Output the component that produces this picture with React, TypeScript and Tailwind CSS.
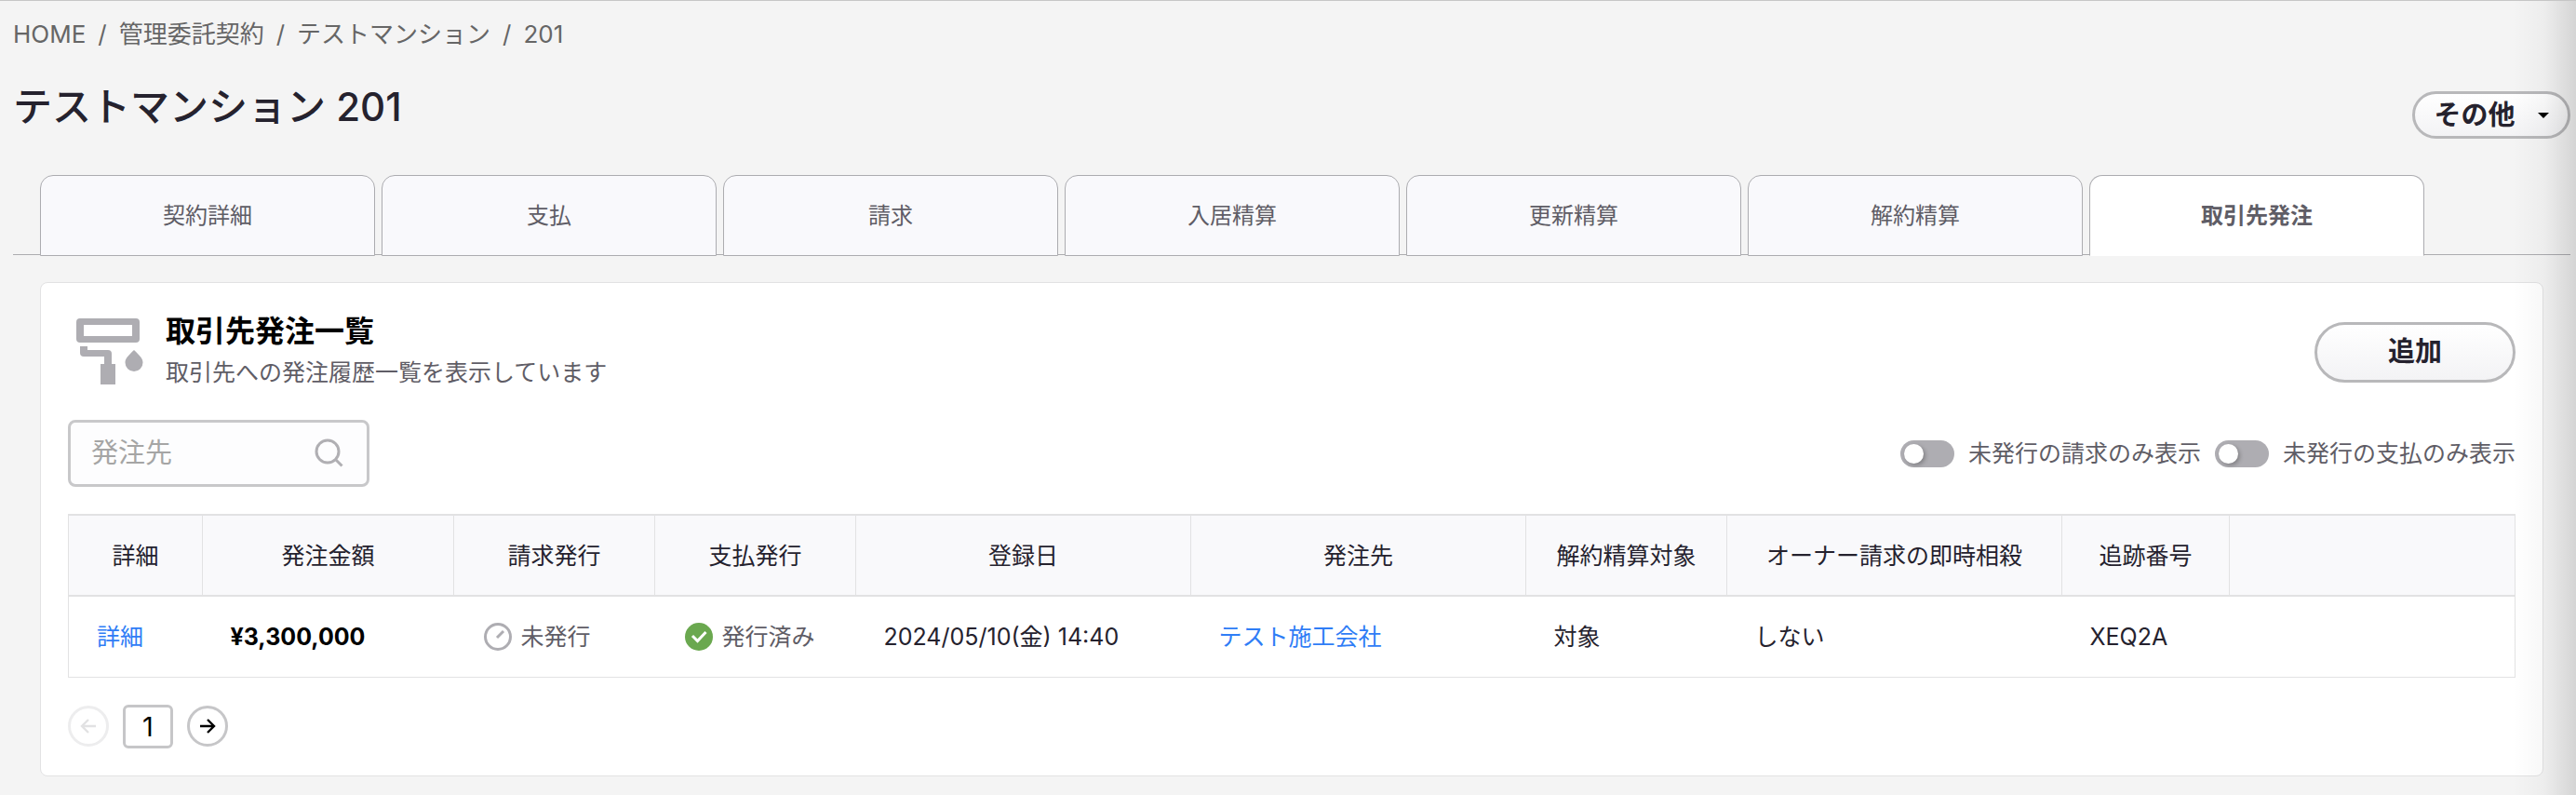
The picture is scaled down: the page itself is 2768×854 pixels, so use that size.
import { clsx } from "clsx";

const tabs = ["契約詳細", "支払", "請求", "入居精算", "更新精算", "解約精算", "取引先発注"];

const columns = [
    { label: "詳細", width: "w-[144px]" },
    { label: "発注金額", width: "w-[270px]" },
    { label: "請求発行", width: "w-[216px]" },
    { label: "支払発行", width: "w-[216px]" },
    { label: "登録日", width: "w-[360px]" },
    { label: "発注先", width: "w-[360px]" },
    { label: "解約精算対象", width: "w-[216px]" },
    { label: "オーナー請求の即時相殺", width: "w-[360px]" },
    { label: "追跡番号", width: "w-[180px]" },
    { label: "", width: "" },
];

function RollerIcon() {
    return (
        <svg viewBox="0 0 72 72" className="size-[72px]" fill="#aeadb2" aria-hidden="true">
            <path fillRule="evenodd" d="M4 0h60a4 4 0 0 1 4 4v18a4 4 0 0 1-4 4H4a4 4 0 0 1-4-4V4a4 4 0 0 1 4-4ZM8 7v12h52V7Z" />
            <path d="M4 30h8v4h22a4 4 0 0 1 4 4v11h4v22H26V49h4v-8H8a4 4 0 0 1-4-4Z" />
            <path d="M62 34c6 6 9.500 9 9.500 13.500a9.500 9.500 0 0 1-19 0C52.500 43 56 40 62 34Z" />
        </svg>
    );
}

function SearchIcon() {
    return (
        <svg viewBox="0 0 32 32" className="size-8" fill="none" stroke="#b0afb3" strokeWidth="3" aria-hidden="true">
            <circle cx="14" cy="14" r="12" />
            <path d="M22.500 22.500l7 7" />
        </svg>
    );
}

function PendingIcon() {
    return (
        <svg viewBox="0 0 30 30" className="size-[30px]" fill="none" stroke="#aeadb2" aria-hidden="true">
            <circle cx="15" cy="15" r="13.5" strokeWidth="3" />
            <path d="M14 16l7-7" strokeWidth="3" />
        </svg>
    );
}

function DoneIcon() {
    return (
        <svg viewBox="0 0 30 30" className="size-[30px]" fill="none" aria-hidden="true">
            <circle cx="15" cy="15" r="15" fill="#6aa84f" />
            <path d="M8 14l5.500 5.500L22.500 10" stroke="#fff" strokeWidth="3" />
        </svg>
    );
}

function ArrowIcon({ flip = false }: { flip?: boolean }) {
    return (
        <svg viewBox="0 0 18 18" className={clsx("size-[18px]", flip && "rotate-180")} fill="none" stroke="currentColor" strokeWidth="2.4" aria-hidden="true">
            <path d="M1 9h15M9 2l7 7-7 7" />
        </svg>
    );
}

function Switch({ label }: { label: string }) {
    return (
        <label className="flex items-center gap-[15px] text-[25px] leading-9 text-[#5f5d66]">
            <span className="relative flex">
                <input type="checkbox" role="switch" className="h-[29px] w-[58px] appearance-none rounded-full bg-[#aeadb2]" />
                <span className="pointer-events-none absolute top-1 left-1 size-[21px] rounded-full bg-white shadow-[2px_2px_4px_rgba(0,0,0,0.25)]" />
            </span>
            {label}
        </label>
    );
}

function Breadcrumb() {
    return (
        <nav className="flex gap-[13px] text-[26px] leading-9 text-[#666]">
            <a href="#">HOME</a>
            <span>/</span>
            <a href="#">管理委託契約</a>
            <span>/</span>
            <a href="#">テストマンション</a>
            <span>/</span>
            <span>201</span>
        </nav>
    );
}

function OrdersTable() {
    return (
        <table className="w-full table-fixed border-collapse border border-[#e2e2e3] text-left text-[25px] leading-9 text-[#25222e]">
            <thead className="border-y-2 border-[#e2e2e3] bg-[#f9f9fb]">
                <tr>
                    {columns.map((column) => (
                        <th key={column.label} className={clsx("h-[87px] border-x border-[#e2e2e3] p-0 text-center font-normal whitespace-nowrap", column.width)}>
                            {column.label}
                        </th>
                    ))}
                </tr>
            </thead>
            <tbody>
                <tr className="h-[87px] whitespace-nowrap">
                    <td className="px-[30px]"><a href="#" className="text-[#2f7df6]">詳細</a></td>
                    <td className="px-[30px] font-bold text-black">¥3,300,000</td>
                    <td className="px-8">
                        <span className="flex items-center gap-2.5 text-[#5f5d66]"><PendingIcon />未発行</span>
                    </td>
                    <td className="px-8">
                        <span className="flex items-center gap-2.5 text-[#5f5d66]"><DoneIcon />発行済み</span>
                    </td>
                    <td className="px-[30px]">2024/05/10(金) 14:40</td>
                    <td className="px-[30px]"><a href="#" className="text-[#2f7df6]">テスト施工会社</a></td>
                    <td className="px-[30px]">対象</td>
                    <td className="px-[30px]">しない</td>
                    <td className="px-[30px]">XEQ2A</td>
                    <td />
                </tr>
            </tbody>
        </table>
    );
}

export default function App() {
    return (
        <div className="relative min-h-screen border-t border-[#c6c6c6] bg-[#f4f4f4] pt-[18px] pr-[6px] pb-5 pl-[14px] font-[Inter,'Noto_Sans_CJK_JP',sans-serif]">
            <Breadcrumb />

            <header className="flex items-start justify-between pt-[30px]">
                <h1 className="text-[42px] leading-[60px] font-medium text-[#25222e]">テストマンション 201</h1>
                <button type="button" className="mt-[13px] flex h-[51px] w-[170px] items-center justify-center gap-6 rounded-full border-3 border-[#b8b8ba] bg-linear-to-b from-white to-[#f3f3f5] text-[29px] leading-none font-bold text-[#25222e]">
                    その他
                    <span className="border-x-6 border-t-6 border-x-transparent border-t-black" />
                </button>
            </header>

            {/* Tabs */}
            <div className="mt-[39px] flex h-[86px] gap-[7px] border-b border-[#acacb0] px-[29px]">
                {tabs.map((tab, i) => (
                    <button
                        key={tab}
                        type="button"
                        className={clsx(
                            "h-[87px] max-w-[360px] flex-1 rounded-t-[14px] border border-[#acacb0] text-[24px] text-[#5f5d66]",
                            i === tabs.length - 1 ? "border-b-white bg-white font-bold" : "bg-[#f9f9fc]"
                        )}
                    >
                        {tab}
                    </button>
                ))}
            </div>

            <section className="mx-[29px] mt-[29px] rounded-lg border border-[#e2e2e3] bg-white px-[29px] pb-[29px]">
                <div className="flex items-center justify-between pt-[30px]">
                    <div className="flex items-center gap-6 pl-[9px]">
                        <RollerIcon />
                        <div>
                            <h2 className="text-[32px] leading-[44px] font-bold text-black">取引先発注一覧</h2>
                            <p className="text-[25px] leading-[44px] text-[#5f5d66]">取引先への発注履歴一覧を表示しています</p>
                        </div>
                    </div>
                    <button type="button" className="h-[65px] w-[216px] rounded-full border-3 border-[#b8b8ba] bg-linear-to-b from-white to-[#f3f3f5] text-[29px] font-bold text-[#25222e]">
                        追加
                    </button>
                </div>

                <div className="mt-[29px] flex items-center justify-between">
                    <label className="flex h-[72px] w-[324px] items-center rounded-lg border-3 border-[#c8c8ca] bg-[#fdfdfe] pr-6 pl-[22px]">
                        <input type="text" aria-label="発注先" placeholder="発注先" className="min-w-0 flex-1 bg-transparent text-[29px] outline-none placeholder:text-[#a5a5a5]" />
                        <SearchIcon />
                    </label>
                    <div className="flex gap-[15px]">
                        <Switch label="未発行の請求のみ表示" />
                        <Switch label="未発行の支払のみ表示" />
                    </div>
                </div>

                <div className="mt-[29px]">
                    <OrdersTable />
                </div>

                {/* Pagination */}
                <div className="mt-[29px] flex items-center gap-[15px]">
                    <button type="button" disabled aria-label="前へ" className="flex size-[44px] items-center justify-center rounded-full border-3 border-[#ededee] text-[#e2e2e3]">
                        <ArrowIcon flip />
                    </button>
                    <button type="button" className="h-[47px] w-[54px] rounded-md border-3 border-[#c6c6c8] text-[29px] leading-none text-black">1</button>
                    <button type="button" aria-label="次へ" className="flex size-[44px] items-center justify-center rounded-full border-3 border-[#c6c6c8] text-black">
                        <ArrowIcon />
                    </button>
                </div>
            </section>

            {/* Shade along the right edge */}
            <div className="pointer-events-none absolute inset-y-0 right-0 w-[68px] bg-linear-to-r from-transparent via-black/3 to-black/13" />
        </div>
    );
}
